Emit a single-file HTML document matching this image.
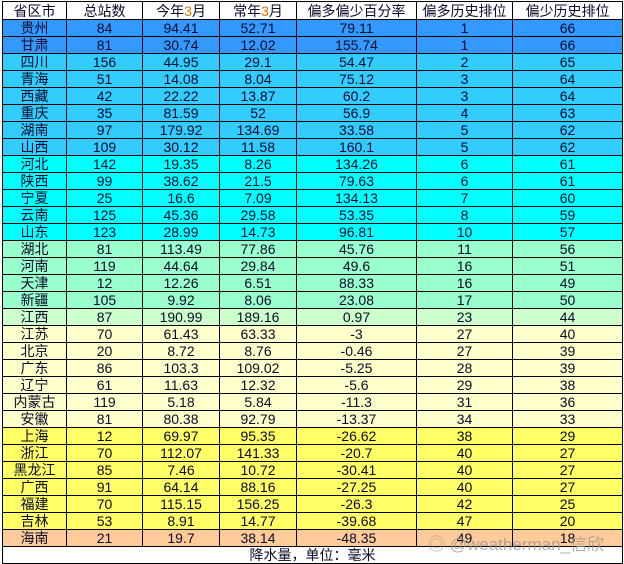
<!DOCTYPE html>
<html><head><meta charset="utf-8"><style>
html,body{margin:0;padding:0;background:#fff;width:624px;height:564px;overflow:hidden;position:relative}
table{position:absolute;left:2px;top:1px;border-collapse:collapse;table-layout:fixed;width:621px;font-family:"Liberation Sans","Noto Sans CJK SC",sans-serif;color:#0a0a2a}
td{border:1px solid #000;padding:0;text-align:center;height:16px;line-height:16px;font-size:14px;overflow:hidden;white-space:nowrap}
tr.h td{height:17px;font-size:14px;background:#fff}
td:first-child{font-size:14px}
.a td{background:#3399ff}.b td{background:#33ccff}.c td{background:#00ffff}.d td{background:#99ffcc}.e td{background:#ccffcc}.f td{background:#ffffcc}.g td{background:#ffff66}.i td{background:#ffcc99}
tr.ft td{height:16px;background:#fff;font-size:14px}
.wm{position:absolute;left:428px;top:530px;font-family:"Liberation Sans","Noto Sans CJK SC",sans-serif;font-size:17px;color:rgba(150,150,150,.75);white-space:nowrap}
.o{color:#e07000}
</style></head><body>
<table>
<colgroup><col style="width:64px"><col style="width:76px"><col style="width:77px"><col style="width:77px"><col style="width:120px"><col style="width:96px"><col style="width:110px"></colgroup>
<tr class="h"><td>省区市</td><td>总站数</td><td>今年<span class="o">3</span>月</td><td>常年<span class="o">3</span>月</td><td>偏多偏少百分率</td><td>偏多历史排位</td><td>偏少历史排位</td></tr>
<tr class="a"><td>贵州</td><td>84</td><td>94.41</td><td>52.71</td><td>79.11</td><td>1</td><td>66</td></tr>
<tr class="a"><td>甘肃</td><td>81</td><td>30.74</td><td>12.02</td><td>155.74</td><td>1</td><td>66</td></tr>
<tr class="b"><td>四川</td><td>156</td><td>44.95</td><td>29.1</td><td>54.47</td><td>2</td><td>65</td></tr>
<tr class="b"><td>青海</td><td>51</td><td>14.08</td><td>8.04</td><td>75.12</td><td>3</td><td>64</td></tr>
<tr class="b"><td>西藏</td><td>42</td><td>22.22</td><td>13.87</td><td>60.2</td><td>3</td><td>64</td></tr>
<tr class="b"><td>重庆</td><td>35</td><td>81.59</td><td>52</td><td>56.9</td><td>4</td><td>63</td></tr>
<tr class="b"><td>湖南</td><td>97</td><td>179.92</td><td>134.69</td><td>33.58</td><td>5</td><td>62</td></tr>
<tr class="b"><td>山西</td><td>109</td><td>30.12</td><td>11.58</td><td>160.1</td><td>5</td><td>62</td></tr>
<tr class="c"><td>河北</td><td>142</td><td>19.35</td><td>8.26</td><td>134.26</td><td>6</td><td>61</td></tr>
<tr class="c"><td>陕西</td><td>99</td><td>38.62</td><td>21.5</td><td>79.63</td><td>6</td><td>61</td></tr>
<tr class="c"><td>宁夏</td><td>25</td><td>16.6</td><td>7.09</td><td>134.13</td><td>7</td><td>60</td></tr>
<tr class="c"><td>云南</td><td>125</td><td>45.36</td><td>29.58</td><td>53.35</td><td>8</td><td>59</td></tr>
<tr class="c"><td>山东</td><td>123</td><td>28.99</td><td>14.73</td><td>96.81</td><td>10</td><td>57</td></tr>
<tr class="d"><td>湖北</td><td>81</td><td>113.49</td><td>77.86</td><td>45.76</td><td>11</td><td>56</td></tr>
<tr class="d"><td>河南</td><td>119</td><td>44.64</td><td>29.84</td><td>49.6</td><td>16</td><td>51</td></tr>
<tr class="d"><td>天津</td><td>12</td><td>12.26</td><td>6.51</td><td>88.33</td><td>16</td><td>49</td></tr>
<tr class="d"><td>新疆</td><td>105</td><td>9.92</td><td>8.06</td><td>23.08</td><td>17</td><td>50</td></tr>
<tr class="e"><td>江西</td><td>87</td><td>190.99</td><td>189.16</td><td>0.97</td><td>23</td><td>44</td></tr>
<tr class="f"><td>江苏</td><td>70</td><td>61.43</td><td>63.33</td><td>-3</td><td>27</td><td>40</td></tr>
<tr class="f"><td>北京</td><td>20</td><td>8.72</td><td>8.76</td><td>-0.46</td><td>27</td><td>39</td></tr>
<tr class="f"><td>广东</td><td>86</td><td>103.3</td><td>109.02</td><td>-5.25</td><td>28</td><td>39</td></tr>
<tr class="f"><td>辽宁</td><td>61</td><td>11.63</td><td>12.32</td><td>-5.6</td><td>29</td><td>38</td></tr>
<tr class="f"><td>内蒙古</td><td>119</td><td>5.18</td><td>5.84</td><td>-11.3</td><td>31</td><td>36</td></tr>
<tr class="f"><td>安徽</td><td>81</td><td>80.38</td><td>92.79</td><td>-13.37</td><td>34</td><td>33</td></tr>
<tr class="g"><td>上海</td><td>12</td><td>69.97</td><td>95.35</td><td>-26.62</td><td>38</td><td>29</td></tr>
<tr class="g"><td>浙江</td><td>70</td><td>112.07</td><td>141.33</td><td>-20.7</td><td>40</td><td>27</td></tr>
<tr class="g"><td>黑龙江</td><td>85</td><td>7.46</td><td>10.72</td><td>-30.41</td><td>40</td><td>27</td></tr>
<tr class="g"><td>广西</td><td>91</td><td>64.14</td><td>88.16</td><td>-27.25</td><td>40</td><td>27</td></tr>
<tr class="g"><td>福建</td><td>70</td><td>115.15</td><td>156.25</td><td>-26.3</td><td>42</td><td>25</td></tr>
<tr class="g"><td>吉林</td><td>53</td><td>8.91</td><td>14.77</td><td>-39.68</td><td>47</td><td>20</td></tr>
<tr class="i"><td>海南</td><td>21</td><td>19.7</td><td>38.14</td><td>-48.35</td><td>49</td><td>18</td></tr>
<tr class="ft"><td colspan="7">降水量，单位：毫米</td></tr>
</table>
<div class="wm">◎ @weatherman_信欣</div>
</body></html>
